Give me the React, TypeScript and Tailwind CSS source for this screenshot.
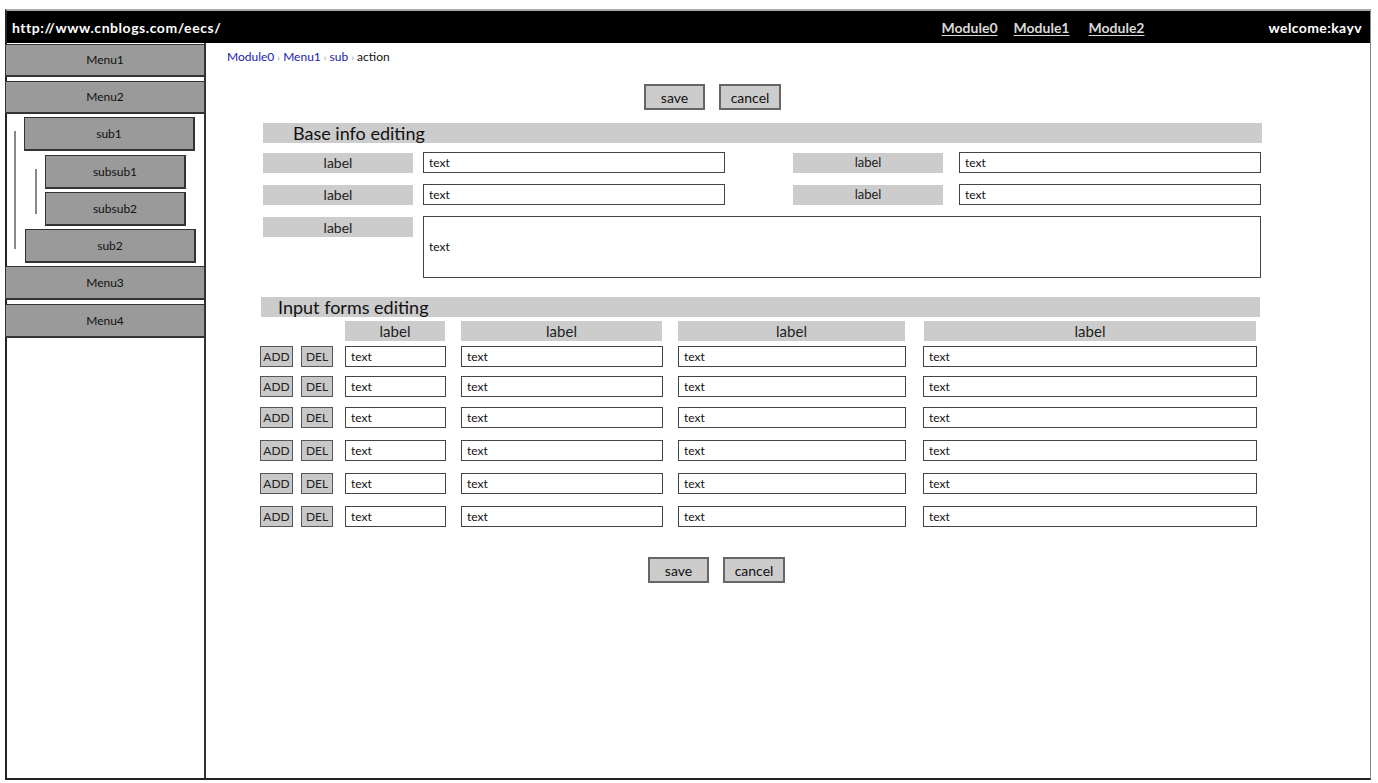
import React from "react";

const font = { fontFamily: '"Comic Sans MS", Lato, "DejaVu Sans", sans-serif' };

function MenuItem({ label, cls }: { label: string; cls: string }) {
  return (
    <div
      className={`flex items-center justify-center bg-[#9a9a9a] border border-[#333] border-b-2 border-r-2 text-[12px] text-[#111] ${cls}`}
    >
      {label}
    </div>
  );
}

function Btn({ label, cls }: { label: string; cls: string }) {
  return (
    <div
      className={`flex items-center justify-center bg-[#cccccc] border-2 border-[#666] text-[14px] text-[#111] ${cls}`}
    >
      {label}
    </div>
  );
}

function Label({ cls, size = "text-[14px]" }: { cls: string; size?: string }) {
  return (
    <div className={`flex items-center justify-center bg-[#cccccc] text-[#222] ${size} ${cls}`}>
      label
    </div>
  );
}

function Input({ cls }: { cls: string }) {
  return (
    <div
      className={`flex items-center h-[21px] bg-white border-[1.5px] border-[#444] pl-[5px] text-[12px] text-[#111] ${cls}`}
    >
      text
    </div>
  );
}

function SmallBtn({ label }: { label: string }) {
  return (
    <div className="flex items-center justify-center h-[21px] bg-[#c8c8c8] border-[1.5px] border-[#555] text-[12px] text-[#222]">
      {label}
    </div>
  );
}

const rowMargins = ["mt-[5px]", "mt-[9px]", "mt-[10px]", "mt-[12px]", "mt-[12px]", "mt-[12px]"];

export default function App() {
  return (
    <div className="w-[1378px] h-[783px] bg-white overflow-hidden" style={font}>
      <div className="ml-[5px] mt-[9px] w-[1366px] h-[771px] border-t-2 border-t-[#aaa] border-l-2 border-l-[#222] border-r border-r-[#888] border-b-2 border-b-[#222] flex flex-col">
        {/* header */}
        <div className="h-[32px] bg-black flex items-center shrink-0">
          <div className="ml-[5px] text-white font-bold text-[14px] tracking-[0.55px]">
            http://www.cnblogs.com/eecs/
          </div>
          <div className="flex-1" />
          <div className="flex items-center text-[#d8d8d8] font-bold text-[14px] underline underline-offset-2">
            <span className="mr-[16px]">Module0</span>
            <span className="mr-[19px]">Module1</span>
            <span>Module2</span>
          </div>
          <div className="w-[124px]" />
          <div className="text-white font-bold text-[14px] tracking-[0.4px] mr-[8px]">welcome:kayv</div>
        </div>
        {/* body */}
        <div className="flex flex-1">
          {/* sidebar */}
          <div className="w-[199px] border-r-2 border-r-[#333] flex flex-col shrink-0">
            <MenuItem label="Menu1" cls="h-[33px] mt-[1px] -ml-[2px] w-[201px]" />
            <MenuItem label="Menu2" cls="h-[33px] mt-[4px] -ml-[2px] w-[201px]" />
            <div className="relative flex flex-col mt-[3px]">
              <div className="absolute left-[7px] top-[14px] w-[2px] h-[118px] bg-[#888]" />
              <div className="absolute left-[28px] top-[52px] w-[2px] h-[45px] bg-[#888]" />
              <MenuItem label="sub1" cls="h-[34px] ml-[17px] w-[171px]" />
              <MenuItem label="subsub1" cls="h-[34px] ml-[38px] w-[141px] mt-[4px]" />
              <MenuItem label="subsub2" cls="h-[34px] ml-[38px] w-[141px] mt-[3px]" />
              <MenuItem label="sub2" cls="h-[34px] ml-[18px] w-[171px] mt-[3px]" />
            </div>
            <MenuItem label="Menu3" cls="h-[34px] mt-[3px] -ml-[2px] w-[201px]" />
            <MenuItem label="Menu4" cls="h-[34px] mt-[4px] -ml-[2px] w-[201px]" />
          </div>
          {/* main */}
          <div className="flex-1 flex flex-col">
            <div className="ml-[21px] mt-[7px] h-[14px] flex items-center text-[12px]">
              <span className="text-[#1a1ab0]">Module0</span>
              <span className="text-[#999] mx-[3px] text-[10px]">›</span>
              <span className="text-[#1a1ab0]">Menu1</span>
              <span className="text-[#999] mx-[3px] text-[10px]">›</span>
              <span className="text-[#1a1ab0]">sub</span>
              <span className="text-[#999] mx-[3px] text-[10px]">›</span>
              <span className="text-[#111]">action</span>
            </div>
            <div className="flex mt-[20px] ml-[438px]">
              <Btn label="save" cls="w-[61px] h-[26px]" />
              <Btn label="cancel" cls="w-[62px] h-[26px] ml-[14px]" />
            </div>

            {/* Base info */}
            <div className="ml-[57px] w-[999px] mt-[13px] h-[20px] bg-[#cccccc] flex items-center pl-[30px] text-[18px] text-[#111]">
              Base info editing
            </div>
            <div className="ml-[57px] mt-[9px] flex items-center">
              <Label cls="w-[150px] h-[20px]" />
              <Input cls="w-[302px] ml-[10px]" />
              <Label cls="w-[150px] h-[20px] ml-[68px]" size="text-[13px]" />
              <Input cls="w-[302px] ml-[16px]" />
            </div>
            <div className="ml-[57px] mt-[11px] flex items-center">
              <Label cls="w-[150px] h-[20px]" />
              <Input cls="w-[302px] ml-[10px]" />
              <Label cls="w-[150px] h-[20px] ml-[68px]" size="text-[13px]" />
              <Input cls="w-[302px] ml-[16px]" />
            </div>
            <div className="ml-[57px] mt-[11px] flex items-start">
              <Label cls="w-[150px] h-[20px] mt-[1px]" />
              <div className="ml-[10px] w-[838px] h-[62px] border-[1.5px] border-[#444] flex items-center pl-[5px] text-[12px] text-[#111]">
                text
              </div>
            </div>

            {/* Input forms */}
            <div className="ml-[55px] w-[999px] mt-[19px] h-[20px] bg-[#cccccc] flex items-center pl-[17px] text-[18px] text-[#111]">
              Input forms editing
            </div>
            <div className="ml-[139px] mt-[4px] flex">
              <Label cls="w-[100px] h-[20px]" size="text-[15px]" />
              <Label cls="w-[201px] h-[20px] ml-[16px]" size="text-[15px]" />
              <Label cls="w-[227px] h-[20px] ml-[16px]" size="text-[15px]" />
              <Label cls="w-[332px] h-[20px] ml-[19px]" size="text-[15px]" />
            </div>
            {rowMargins.map((m, i) => (
              <div key={i} className={`ml-[54px] flex items-center ${m}`}>
                <div className="w-[33px]">
                  <SmallBtn label="ADD" />
                </div>
                <div className="w-[32px] ml-[8px]">
                  <SmallBtn label="DEL" />
                </div>
                <Input cls="w-[101px] ml-[12px]" />
                <Input cls="w-[202px] ml-[15px]" />
                <Input cls="w-[228px] ml-[15px]" />
                <Input cls="w-[334px] ml-[17px]" />
              </div>
            ))}
            <div className="flex mt-[30px] ml-[442px]">
              <Btn label="save" cls="w-[61px] h-[26px]" />
              <Btn label="cancel" cls="w-[62px] h-[26px] ml-[14px]" />
            </div>
          </div>
        </div>
      </div>
    </div>
  );
}
